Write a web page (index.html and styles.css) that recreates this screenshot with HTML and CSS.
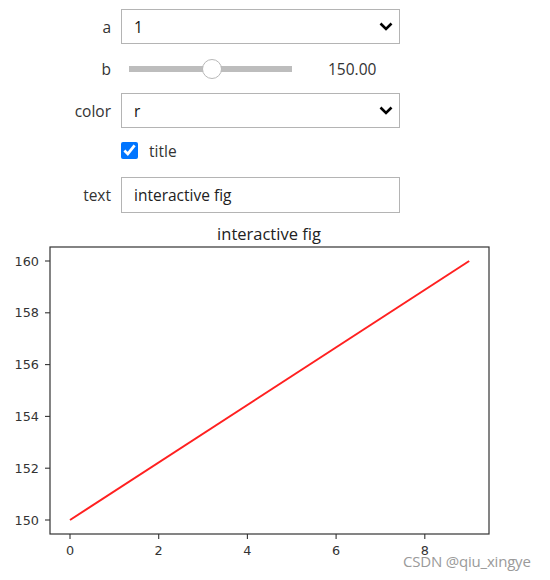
FILE: index.html
```html
<!DOCTYPE html>
<html>
<head>
<meta charset="utf-8">
<link rel="stylesheet" href="styles.css">
</head>
<body>
<div class="page">
  <div class="widgets">
    <div class="row">
      <label class="lbl">a</label>
      <div class="select">
        <span class="sel-val">1</span>
        <svg class="chev" width="14" height="9" viewBox="0 0 14 9"><path d="M1.5 1.5 L7 7 L12.5 1.5" fill="none" stroke="#000" stroke-width="2.6"/></svg>
      </div>
    </div>
    <div class="row">
      <label class="lbl">b</label>
      <div class="slider">
        <div class="track"><div class="thumb"></div></div>
        <span class="readout">150.00</span>
      </div>
    </div>
    <div class="row">
      <label class="lbl">color</label>
      <div class="select">
        <span class="sel-val">r</span>
        <svg class="chev" width="14" height="9" viewBox="0 0 14 9"><path d="M1.5 1.5 L7 7 L12.5 1.5" fill="none" stroke="#000" stroke-width="2.6"/></svg>
      </div>
    </div>
    <div class="row">
      <span class="lbl"></span>
      <label class="check">
        <input type="checkbox" checked>
        <span>title</span>
      </label>
    </div>
    <div class="row">
      <label class="lbl">text</label>
      <input class="textbox" type="text" value="interactive fig">
    </div>
  </div>

  <svg class="plot" width="550" height="360" viewBox="0 0 550 360">
    <text class="title" x="269" y="21" text-anchor="middle">interactive fig</text>
    <rect x="50" y="28" width="439" height="287" fill="none" stroke="#333" stroke-width="1.2"/>
    <g class="ticks" stroke="#333" stroke-width="1.1">
      <line x1="45" x2="50" y1="42" y2="42"/>
      <line x1="45" x2="50" y1="93.8" y2="93.8"/>
      <line x1="45" x2="50" y1="145.6" y2="145.6"/>
      <line x1="45" x2="50" y1="197.4" y2="197.4"/>
      <line x1="45" x2="50" y1="249.2" y2="249.2"/>
      <line x1="45" x2="50" y1="301" y2="301"/>
      <line x1="70" x2="70" y1="315" y2="320"/>
      <line x1="158.7" x2="158.7" y1="315" y2="320"/>
      <line x1="247.4" x2="247.4" y1="315" y2="320"/>
      <line x1="336.1" x2="336.1" y1="315" y2="320"/>
      <line x1="424.8" x2="424.8" y1="315" y2="320"/>
    </g>
    <g class="tl" text-anchor="end">
      <text x="39" y="46.5">160</text>
      <text x="39" y="98.3">158</text>
      <text x="39" y="150.1">156</text>
      <text x="39" y="201.9">154</text>
      <text x="39" y="253.7">152</text>
      <text x="39" y="305.5">150</text>
    </g>
    <g class="tl" text-anchor="middle">
      <text x="70" y="335.5">0</text>
      <text x="158.7" y="335.5">2</text>
      <text x="247.4" y="335.5">4</text>
      <text x="336.1" y="335.5">6</text>
      <text x="424.8" y="335.5">8</text>
    </g>
    <line x1="70" y1="301" x2="469.2" y2="42" stroke="#ff2020" stroke-width="2"/>
  </svg>

  <div class="watermark">CSDN @qiu_xingye</div>
</div>
</body>
</html>
```

FILE: styles.css
```css
html, body {
  margin: 0;
  padding: 0;
  background: #fff;
}
.page {
  position: relative;
  width: 550px;
  height: 580px;
  overflow: hidden;
  font-family: "Open Sans", "Noto Sans", sans-serif;
}
.widgets {
  display: flex;
  flex-direction: column;
  gap: 7px;
  padding-top: 9px;
}
.row {
  display: flex;
  align-items: center;
  height: 35px;
}
.lbl {
  width: 111px;
  flex: none;
  text-align: right;
  font-size: 15.5px;
  color: #333;
  margin-right: 10px;
}
.select {
  box-sizing: border-box;
  width: 279px;
  height: 35px;
  border: 1px solid #b4b4b4;
  display: flex;
  align-items: center;
  justify-content: space-between;
  padding: 0 6px 0 12px;
  font-size: 15.5px;
  color: #111;
}
.chev {
  display: block;
}
.slider {
  display: flex;
  align-items: center;
  height: 35px;
}
.track {
  position: relative;
  margin-left: 8px;
  width: 163px;
  height: 6px;
  background: #bdbdbd;
}
.thumb {
  position: absolute;
  left: 73px;
  top: -7px;
  width: 18px;
  height: 18px;
  border-radius: 50%;
  background: #fff;
  border: 1px solid #b8b8b8;
}
.readout {
  margin-left: 36px;
  font-size: 15.5px;
  color: #333;
}
.check {
  display: flex;
  align-items: center;
  font-size: 15.5px;
  color: #333;
  margin-top: -4px;
}
.check input {
  width: 17px;
  height: 17px;
  margin: 0 11px 0 0;
  accent-color: #0075ff;
}
.textbox {
  box-sizing: border-box;
  width: 279px;
  height: 36px;
  border: 1px solid #b4b4b4;
  padding: 0 12px;
  font-family: "Open Sans", "Noto Sans", sans-serif;
  font-size: 15.5px;
  color: #222;
  outline: none;
}
.plot {
  display: block;
  margin-top: 7px;
}
.title {
  font-family: "Open Sans", "DejaVu Sans", sans-serif;
  font-size: 16.5px;
  fill: #222;
}
.tl text {
  font-family: "DejaVu Sans", sans-serif;
  font-size: 12.8px;
  fill: #333;
}
.watermark {
  position: absolute;
  left: 403px;
  top: 551px;
  font-family: "Open Sans", "Noto Sans", sans-serif;
  font-size: 15px;
  color: #9a9a9a;
  letter-spacing: -0.2px;
}
```
